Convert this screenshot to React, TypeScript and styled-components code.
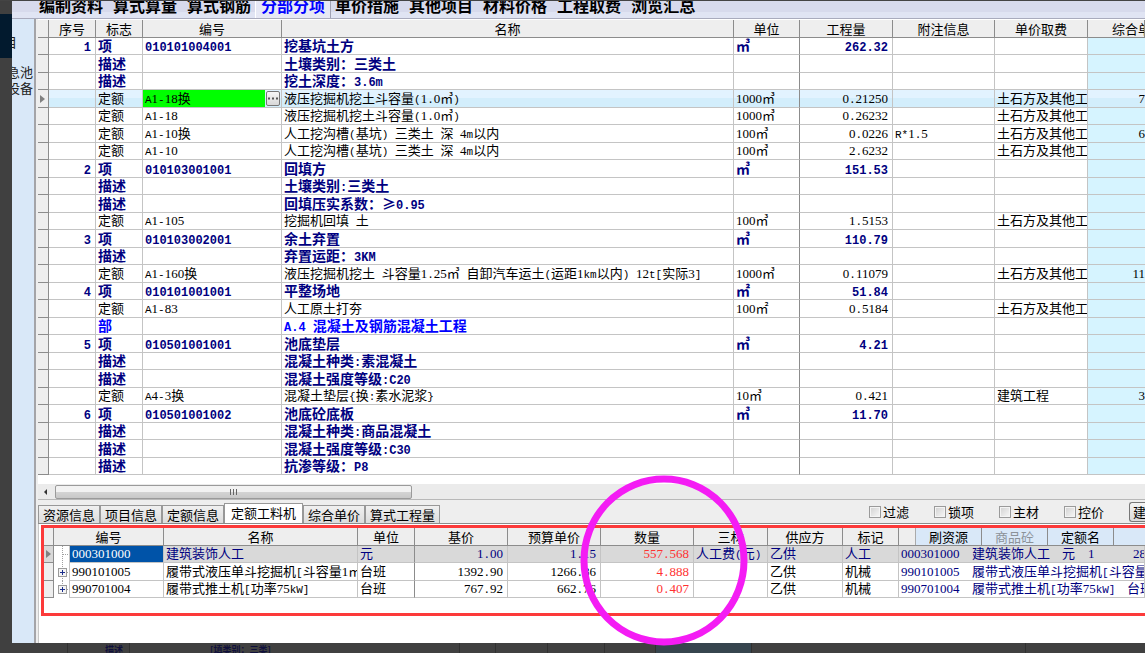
import React from 'react';
import styled, { createGlobalStyle, css } from 'styled-components';

const NAVY = '#000080';
const LINE = '#c4c4c4';
const DARK_LINE = '#8c8c8c';
const HEAD = '#eeeeee';
const PALE_BLUE = '#d9e8f8';

const GlobalStyle = createGlobalStyle`
  * { box-sizing: border-box; }
  body {
    margin: 0;
    background: #404040;
    color: #000;
    font: 13px/16px 'Noto Sans CJK SC', sans-serif;
    overflow: hidden;
  }
  button { font: inherit; color: inherit; margin: 0; padding: 0; border: 0; background: none; white-space: nowrap; }
`;

/* ---------- text ---------- */

const Latin = styled.span<{ $strong?: boolean }>`
  font-family: 'Liberation Mono', monospace;
  font-size: ${p => (p.$strong ? 12 : 11)}px;
  line-height: 0;
`;

const Digits = styled.span`
  font-family: 'Liberation Serif', serif;
  font-size: 13px;
  line-height: 0;
`;

/* Sets figures in a serif and other Latin signs in a monospace, beside the Chinese text. */
function Mixed({ children, strong }: { children: string; strong?: boolean }) {
  const parts = children.split(strong ? /([\x20-\x7e]+)/ : /([0-9]+|[\x20-\x2f\x3a-\x7e]+)/);
  return (
    <>
      {parts.map((part, i) => {
        if (i % 2 === 0) return part;
        return !strong && /^[0-9]/.test(part)
          ? <Digits key={i}>{part}</Digits>
          : <Latin key={i} $strong={strong}>{part}</Latin>;
      })}
    </>
  );
}

/* ---------- frame ---------- */

const Page = styled.div`
  display: flex;
  flex-direction: column;
  min-height: 100vh;
  border-top: 1px solid #444444;
  overflow: hidden;
`;

const Frame = styled.div`
  display: flex;
  flex: 1;
`;

const Edge = styled.div`
  width: 12px;
  padding-top: 13px;
`;

const EdgeMark = styled.div`
  height: 44px;
  background: #021a2e;
`;

const Win = styled.div`
  display: flex;
  flex: 1;
  flex-direction: column;
  min-width: 0;
  background: #fff;
`;

const Menu = styled.nav`
  display: flex;
  height: 18px;
  padding-left: 22px;
  overflow: hidden;
  background: linear-gradient(#d7daec 0 11px, #e0e4f3 11px);
  border-bottom: 1px solid #a9abbd;
`;

const MenuItem = styled.button<{ $active?: boolean }>`
  display: flex;
  align-items: flex-end;
  height: 17px;
  padding: 0 5px 5px;
  font-size: 16px;
  line-height: 16px;
  font-weight: 700;
  ${p => p.$active && css`
    color: #0000ff;
    background: #e6e8f4;
    box-shadow: -1px 0 #fff, 1px 0 #a0a2b4;
  `}
`;

const Body = styled.div`
  display: flex;
  flex: 1;
`;

const Side = styled.aside`
  display: flex;
  flex-direction: column;
  align-items: flex-end;
  width: 22px;
  padding: 15px 1px 0 0;
  overflow: hidden;
  background: ${PALE_BLUE};
  color: #222;
  white-space: nowrap;
`;

const SideHead = styled.span`
  margin: 0 16px 14px 0;
`;

const Divider = styled.div`
  width: 4px;
  background: #eeeeee;
  border-left: 2px solid #a4a4a8;
`;

const Content = styled.main`
  flex: 1;
  min-width: 0;
`;

/* ---------- tables ---------- */

const Grid = styled.table`
  width: 100%;
  table-layout: fixed;
  border-collapse: separate;
  border-spacing: 0;
`;

const Col = styled.col<{ $w?: number }>`
  width: ${p => (p.$w ? `${p.$w}px` : 'auto')};
`;

const Th = styled.th<{ $left?: number }>`
  height: 18px;
  padding: 0 0 0 ${p => p.$left ?? 0}px;
  overflow: hidden;
  background: ${HEAD};
  border-right: 1px solid ${DARK_LINE};
  border-bottom: 1px solid ${DARK_LINE};
  font-weight: 400;
  text-align: ${p => (p.$left ? 'left' : 'center')};
  white-space: nowrap;
`;

const Td = styled.td<{ $right?: boolean; $dark?: boolean; $cyan?: boolean; $color?: string; $bare?: boolean }>`
  height: 17px;
  padding: ${p => (p.$bare ? '0' : '0 4px 2px 2px')};
  overflow: hidden;
  border-right: 1px solid ${p => (p.$dark ? DARK_LINE : LINE)};
  border-bottom: 1px solid ${LINE};
  line-height: 14px;
  white-space: pre;
  text-align: ${p => (p.$right ? 'right' : 'left')};
  ${p => p.$color && css`color: ${p.$color};`}
  ${p => p.$cyan && css`background: #d6f4ff; padding: 0 0 2px; border-right: 0;`}
`;

const Mark = styled.td`
  padding: 0;
  background: ${HEAD};
  border-right: 1px solid ${DARK_LINE};
  border-bottom: 1px solid ${DARK_LINE};
  line-height: 0;
`;

type Kind = 'item' | 'part' | 'plain';

const Tr = styled.tr<{ $kind?: Kind; $current?: boolean }>`
  &:nth-child(even) td { height: 18px; }
  ${p => p.$kind === 'item' && css`color: ${NAVY}; font-size: 14px; font-weight: 700;`}
  ${p => p.$kind === 'part' && css`color: #0000ff; font-size: 14px; font-weight: 700;`}
  ${p => p.$current && css`
    ${Td} { background: linear-gradient(#e2f3ff 0 50%, #d3eefc 50%); }
  `}
`;

const EditCell = styled.div`
  display: flex;
  align-items: center;
  gap: 1px;
`;

const EditValue = styled.span`
  flex: 1;
  height: 17px;
  padding-left: 2px;
  line-height: 15px;
  background: #00ff00;
`;

const MoreButton = styled.button`
  display: flex;
  align-items: center;
  justify-content: center;
  width: 14px;
  height: 15px;
  margin-right: 1px;
  background: linear-gradient(#f6f6f6, #d8d8d8);
  border: 1px solid #777;
  border-radius: 2px;
`;

function Pointer() {
  return (
    <svg width="10" height="10" viewBox="0 0 10 10" aria-hidden="true">
      <path d="M2 1 L7 5 L2 9 Z" fill="#808080" />
    </svg>
  );
}

interface Row {
  no?: string;
  flag: string;
  code?: string;
  name: string;
  unit?: string;
  qty?: string;
  note?: string;
  fee?: string;
  price?: string;
  kind: Kind;
  current?: boolean;
}

const EARTH = '土石方及其他工';
const desc = (name: string): Row => ({ flag: '描述', name, kind: 'item' });
const item = (no: string, code: string, name: string, unit: string, qty: string): Row => ({
  no, flag: '项', code, name, unit, qty, kind: 'item',
});
const quota = (code: string, name: string, unit: string, qty: string, fee: string, more: Partial<Row> = {}): Row => ({
  flag: '定额', code, name, unit, qty, fee, kind: 'plain', ...more,
});

const ROWS: Row[] = [
  item('1', '010101004001', '挖基坑土方', '㎥', '262.32'),
  desc('土壤类别：三类土'),
  desc('挖土深度：3.6m'),
  quota('A1-18换', '液压挖掘机挖土斗容量(1.0㎥)', '1000㎥', '0.21250', EARTH, { current: true, price: '7' }),
  quota('A1-18', '液压挖掘机挖土斗容量(1.0㎥)', '1000㎥', '0.26232', EARTH),
  quota('A1-10换', '人工挖沟槽(基坑) 三类土 深 4m以内', '100㎥', '0.0226', EARTH, { note: 'R*1.5', price: '6' }),
  quota('A1-10', '人工挖沟槽(基坑) 三类土 深 4m以内', '100㎥', '2.6232', EARTH),
  item('2', '010103001001', '回填方', '㎥', '151.53'),
  desc('土壤类别:三类土'),
  desc('回填压实系数：≥0.95'),
  quota('A1-105', '挖掘机回填 土', '100㎥', '1.5153', EARTH),
  item('3', '010103002001', '余土弃置', '㎥', '110.79'),
  desc('弃置运距：3KM'),
  quota('A1-160换', '液压挖掘机挖土 斗容量1.25㎥ 自卸汽车运土(运距1km以内) 12t[实际3]', '1000㎥', '0.11079', EARTH, { price: '11' }),
  item('4', '010101001001', '平整场地', '㎡', '51.84'),
  quota('A1-83', '人工原土打夯', '100㎡', '0.5184', EARTH),
  { flag: '部', name: 'A.4 混凝土及钢筋混凝土工程', kind: 'part' },
  item('5', '010501001001', '池底垫层', '㎥', '4.21'),
  desc('混凝土种类:素混凝土'),
  desc('混凝土强度等级:C20'),
  quota('A4-3换', '混凝土垫层{换:素水泥浆}', '10㎥', '0.421', '建筑工程', { price: '3' }),
  item('6', '010501001002', '池底砼底板', '㎥', '11.70'),
  desc('混凝土种类:商品混凝土'),
  desc('混凝土强度等级:C30'),
  desc('抗渗等级：P8'),
];

const TopGrid = styled.div`
  padding: 1px 0 9px;
`;

function BillRow({ row }: { row: Row }) {
  const strong = row.kind !== 'plain';
  const t = (s?: string) => <Mixed strong={strong}>{s ?? ''}</Mixed>;
  return (
    <Tr $kind={row.kind} $current={row.current}>
      <Mark>{row.current && <Pointer />}</Mark>
      <Td $right>{t(row.no)}</Td>
      <Td>{t(row.flag)}</Td>
      {row.current ? (
        <Td $bare>
          <EditCell>
            <EditValue>{t(row.code)}</EditValue>
            <MoreButton aria-label="选择定额">
              <svg width="10" height="3" viewBox="0 0 10 3" aria-hidden="true">
                <path d="M0 .5h2v2H0zM4 .5h2v2H4zM8 .5h2v2H8z" fill="#555" />
              </svg>
            </MoreButton>
          </EditCell>
        </Td>
      ) : (
        <Td>{t(row.code)}</Td>
      )}
      <Td>{t(row.name)}</Td>
      <Td $dark>{t(row.unit)}</Td>
      <Td $right>{t(row.qty)}</Td>
      <Td>{t(row.note)}</Td>
      <Td>{t(row.fee)}</Td>
      <Td $right $cyan>{t(row.price)}</Td>
    </Tr>
  );
}

/* ---------- scroll bar and tabs ---------- */

const ScrollBar = styled.div`
  display: flex;
  align-items: center;
  height: 16px;
  padding-left: 3px;
  background: #ebebeb;
  border-bottom: 1px solid #b8b8b8;
`;

const ScrollThumb = styled.div`
  display: flex;
  align-items: center;
  justify-content: center;
  width: 357px;
  height: 14px;
  margin-left: 4px;
  background: linear-gradient(#f2f2f2 0 50%, #d4d4d4 50%, #c8c8c8);
  border: 1px solid #9a9a9a;
  border-radius: 2px;
`;

const TabBar = styled.div`
  display: flex;
  align-items: flex-end;
  height: 24px;
  background: ${HEAD};
  border-bottom: 1px solid ${DARK_LINE};
  overflow: hidden;
`;

const Tab = styled.button<{ $active?: boolean }>`
  height: ${p => (p.$active ? 20 : 18)}px;
  padding: ${p => (p.$active ? '0 6px 2px' : '0 4px')};
  line-height: 16px;
  background: ${p => (p.$active ? '#fff' : 'linear-gradient(#f0f0f0, #dcdcdc)')};
  border: 1px solid #989898;
  border-bottom: 0;
`;

const Options = styled.div`
  display: flex;
  align-items: center;
  gap: 25px;
  height: 23px;
  margin-left: auto;
`;

const Option = styled.label`
  display: flex;
  align-items: center;
  gap: 2px;
  white-space: nowrap;
`;

const Check = styled.input`
  appearance: none;
  width: 12px;
  height: 12px;
  margin: 0;
  background: linear-gradient(135deg, #d0d0d0, #f8f8f8);
  border: 1px solid #9a9a9a;
  box-shadow: inset 0 0 0 1px #f4f4f4;
`;

const BuildButton = styled.button`
  width: 16px;
  height: 20px;
  padding-left: 3px;
  overflow: hidden;
  text-align: left;
  background: linear-gradient(#f4f4f4, #dadada);
  border: 1px solid #777;
  border-right: 0;
  border-radius: 3px 0 0 3px;
`;

/* ---------- resource pane ---------- */

const Pane = styled.section`
  position: relative;
  padding: 1px 0 27px 2px;
  border-left: 1px solid #c8c8c8;
`;

const RedBox = styled.div`
  min-height: 91px;
  border: 3px solid #fc3a3a;
  border-right: 0;
`;

const Ring = styled.svg`
  position: absolute;
  top: -49px;
  left: 541px;
`;

const ResTr = styled(Tr)`
  ${p => p.$current && css`
    color: ${NAVY};
    && ${Td} { background: #d9d9d9; }
    ${Mark} { background: #d9d9d9; }
  `}
`;

const CodeTd = styled(Td)<{ $selected?: boolean }>`
  ${p => p.$selected && css`&&&& { background: #0053a8; color: #fff; }`}
`;

const TreeTd = styled(Td)`
  &&&& { background: #fff; padding: 0; line-height: 0; border-bottom: 0; }
`;

const HeadTools = styled.div`
  display: flex;
  height: 17px;
  background: ${PALE_BLUE};
  border-left: 1px solid #aaa;
`;

const HeadTool = styled.button<{ $muted?: boolean }>`
  flex: 0 0 66px;
  border-right: 1px solid ${DARK_LINE};
  ${p => p.$muted && css`color: #8c9298;`}
`;

const ToolTh = styled(Th)`
  border-right: 0;
`;

const Cell = styled.span<{ $w?: number }>`
  display: inline-block;
  vertical-align: top;
  ${p => p.$w && css`width: ${p.$w}px;`}
`;

function TreeNode({ leaf, last }: { leaf?: boolean; last?: boolean }) {
  return (
    <svg width="16" height="17" viewBox="0 0 16 17" aria-hidden="true">
      <path d={last ? 'M8.500 0V9' : 'M8.500 0V17'} stroke="#a0a0a0" strokeDasharray="1 1" />
      <path d="M9 8.500H16" stroke="#a0a0a0" strokeDasharray="1 1" />
      {!leaf && (
        <>
          <rect x="4.500" y="4.500" width="8" height="8" fill="#f4f4f4" stroke="#9a9a9a" />
          <path d="M6 8.500h5M8.500 6v5" stroke="#1c2f8c" />
        </>
      )}
    </svg>
  );
}

interface Resource {
  code: string;
  name: string;
  unit: string;
  base: string;
  budget: string;
  qty: string;
  material?: string;
  kind: string;
  echo: [string, number][];
}

const RESOURCES: Resource[] = [
  { code: '000301000', name: '建筑装饰人工', unit: '元', base: '1.00', budget: '1.15', qty: '557.568', material: '人工费(元)', kind: '人工',
    echo: [['000301000', 71], ['建筑装饰人工', 90], ['元', 26], ['1', 45], ['28', 0]] },
  { code: '990101005', name: '履带式液压单斗挖掘机[斗容量1㎥]', unit: '台班', base: '1392.90', budget: '1266.86', qty: '4.888', kind: '机械',
    echo: [['990101005', 71], ['履带式液压单斗挖掘机[斗容量', 0]] },
  { code: '990701004', name: '履带式推土机[功率75kW]', unit: '台班', base: '767.92', budget: '662.76', qty: '0.407', kind: '机械',
    echo: [['990701004', 71], ['履带式推土机[功率75kW]', 155], ['台班', 0]] },
];

/* ---------- strip behind the window ---------- */

const Behind = styled.footer`
  display: flex;
  height: 10px;
  padding-left: 12px;
  overflow: hidden;
  background: #404040;
  color: #10103c;
  font-size: 9px;
  line-height: 13px;
  font-weight: 700;
  white-space: nowrap;
`;

const BehindCell = styled.span<{ $w: number; $pad?: number; $tint?: boolean }>`
  flex: 0 0 ${p => p.$w}px;
  padding-left: ${p => p.$pad ?? 0}px;
  border-right: 1px solid #303030;
  ${p => p.$tint && css`background: #36454e;`}
`;

const MENU = ['编制资料', '算式算量', '算式钢筋', '分部分项', '单价措施', '其他项目', '材料价格', '工程取费', '浏览汇总'];
const TABS = ['资源信息', '项目信息', '定额信息', '定额工料机', '综合单价', '算式工程量'];
const CHECKS = ['过滤', '锁项', '主材', '控价'];
const BILL_COLS = [11, 47, 47, 139, 0, 66, 93, 102, 93, 57];
const RES_COLS = [10, 16, 94, 194, 57, 93, 93, 93, 74, 75, 56, 0];

export default function App() {
  return (
    <Page lang="zh-CN">
      <GlobalStyle />
      <Frame>
        <Edge><EdgeMark /></Edge>
        <Win>
          <Menu>
            {MENU.map(m => <MenuItem key={m} $active={m === '分部分项'}>{m}</MenuItem>)}
          </Menu>
          <Body>
            <Side>
              <SideHead>目</SideHead>
              <span>急池</span>
              <span>设备</span>
            </Side>
            <Divider />
            <Content>
              <TopGrid>
                <Grid>
                  <colgroup>{BILL_COLS.map((w, i) => <Col key={i} $w={w} />)}</colgroup>
                  <thead>
                    <tr>
                      <Th />
                      <Th>序号</Th>
                      <Th>标志</Th>
                      <Th>编号</Th>
                      <Th>名称</Th>
                      <Th>单位</Th>
                      <Th>工程量</Th>
                      <Th>附注信息</Th>
                      <Th>单价取费</Th>
                      <Th $left={24}>综合单价</Th>
                    </tr>
                  </thead>
                  <tbody>{ROWS.map((r, i) => <BillRow key={i} row={r} />)}</tbody>
                </Grid>
              </TopGrid>

              <ScrollBar>
                <svg width="10" height="10" viewBox="0 0 10 10" aria-hidden="true">
                  <path d="M6 2 L3 5 L6 8 Z" fill="#333" />
                </svg>
                <ScrollThumb>
                  <svg width="8" height="6" viewBox="0 0 8 6" aria-hidden="true">
                    <path d="M.5 0v6M3.500 0v6M6.500 0v6" stroke="#666" />
                  </svg>
                </ScrollThumb>
              </ScrollBar>

              <TabBar>
                {TABS.map(t => <Tab key={t} $active={t === '定额工料机'}>{t}</Tab>)}
                <Options>
                  {CHECKS.map(c => (
                    <Option key={c}><Check type="checkbox" />{c}</Option>
                  ))}
                  <BuildButton>建</BuildButton>
                </Options>
              </TabBar>

              <Pane>
                <RedBox>
                  <Grid>
                    <colgroup>{RES_COLS.map((w, i) => <Col key={i} $w={w} />)}</colgroup>
                    <thead>
                      <tr>
                        <Th />
                        <Th colSpan={2}>编号</Th>
                        <Th>名称</Th>
                        <Th>单位</Th>
                        <Th>基价</Th>
                        <Th>预算单价</Th>
                        <Th>数量</Th>
                        <Th>三材</Th>
                        <Th>供应方</Th>
                        <Th>标记</Th>
                        <ToolTh $left={16}>
                          <HeadTools>
                            <HeadTool>刷资源</HeadTool>
                            <HeadTool $muted>商品砼</HeadTool>
                            <HeadTool>定额名</HeadTool>
                          </HeadTools>
                        </ToolTh>
                      </tr>
                    </thead>
                    <tbody>
                      {RESOURCES.map((r, i) => (
                        <ResTr key={r.code} $current={i === 0}>
                          <Mark>{i === 0 && <Pointer />}</Mark>
                          <TreeTd><TreeNode leaf={i === 0} last={i === 2} /></TreeTd>
                          <CodeTd $selected={i === 0}><Mixed>{r.code}</Mixed></CodeTd>
                          <Td><Mixed>{r.name}</Mixed></Td>
                          <Td $dark><Mixed>{r.unit}</Mixed></Td>
                          <Td $right><Mixed>{r.base}</Mixed></Td>
                          <Td $right><Mixed>{r.budget}</Mixed></Td>
                          <Td $right $color="#ff3030"><Mixed>{r.qty}</Mixed></Td>
                          <Td><Mixed>{r.material ?? ''}</Mixed></Td>
                          <Td>乙供</Td>
                          <Td>{r.kind}</Td>
                          <Td $color={NAVY}>
                            {r.echo.map(([s, w]) => <Cell key={s} $w={w}><Mixed>{s}</Mixed></Cell>)}
                          </Td>
                        </ResTr>
                      ))}
                    </tbody>
                  </Grid>
                </RedBox>
                <Ring width="168" height="171" viewBox="0 0 168 171" aria-hidden="true">
                  <ellipse cx="84" cy="85.500" rx="80" ry="81.500" fill="none" stroke="#f41cf4" strokeWidth="7" />
                </Ring>
              </Pane>
            </Content>
          </Body>
        </Win>
      </Frame>
      <Behind>
        <BehindCell $w={56} />
        <BehindCell $w={62} $pad={37}>描述</BehindCell>
        <BehindCell $w={330} $pad={80}>[填类别：三类]</BehindCell>
        <BehindCell $w={36} />
        <BehindCell $w={52} />
        <BehindCell $w={57} />
        <BehindCell $w={51} />
        <BehindCell $w={96} $tint />
        <BehindCell $w={274} />
      </Behind>
    </Page>
  );
}
